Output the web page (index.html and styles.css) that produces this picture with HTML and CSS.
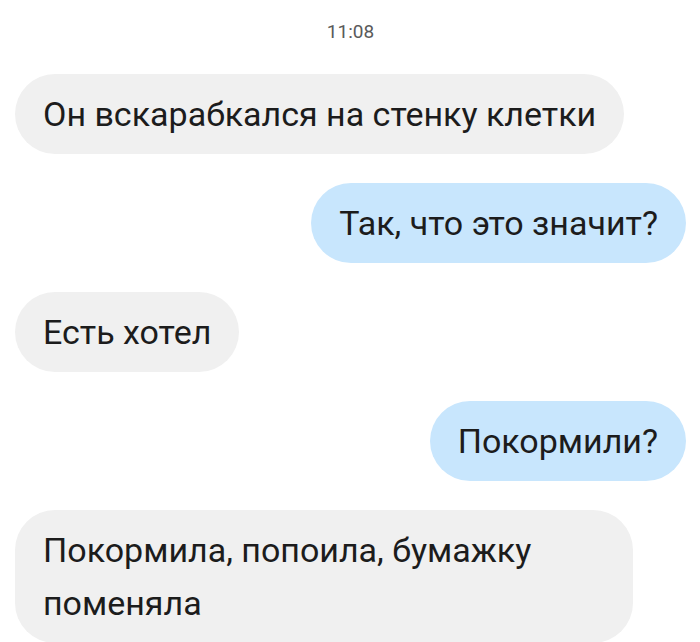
FILE: index.html
```html
<!DOCTYPE html>
<html lang="ru">
<head>
    <meta charset="UTF-8">
    <meta name="viewport" content="width=device-width, initial-scale=1.0">
    <title>Чат</title>
    <link rel="stylesheet" href="styles.css">
</head>
<body>
    <div class="chat">
        <div class="time">11:08</div>

        <div class="msg in">Он вскарабкался на стенку клетки</div>
        <div class="msg out">Так, что это значит?</div>
        <div class="msg in">Есть хотел</div>
        <div class="msg out">Покормили?</div>
        <div class="msg in">Покормила, попоила, бумажку поменяла</div>
    </div>
</body>
</html>
```

FILE: styles.css
```css
body {
    margin: 0;
    background-color: #fff;
    font-family: Roboto, 'Noto Sans', sans-serif;
    color: #1c1c1c;
}

.chat {
    display: flex;
    flex-direction: column;
    gap: 29px;
    padding: 19px 14px 0 15px;
}

.time {
    align-self: center;
    font-size: 19px;
    color: #5a5a5a;
    line-height: 26px;
}

.msg {
    max-width: 562px;
    padding: 13.5px 28px;
    border-radius: 40px;
    font-size: 34px;
    line-height: 53px;
}

.msg.in {
    align-self: flex-start;
    background-color: #f0f0f0;
}

.msg.out {
    align-self: flex-end;
    background-color: #c8e6fd;
}
```
